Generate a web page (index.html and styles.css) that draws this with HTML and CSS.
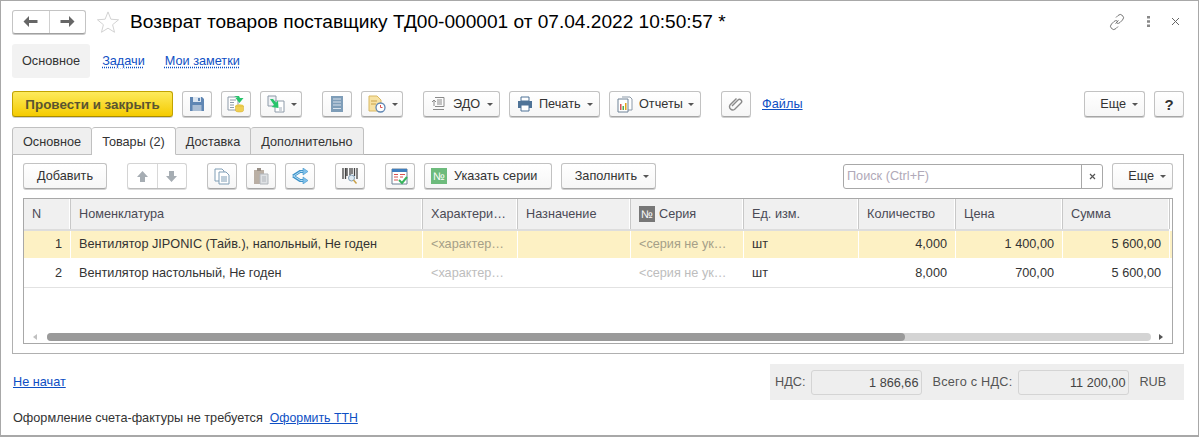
FILE: index.html
```html
<!DOCTYPE html>
<html lang="ru">
<head>
    <meta charset="UTF-8">
    <title>Возврат товаров поставщику</title>
    <link rel="stylesheet" href="styles.css">
</head>
<body>
<div class="window">
    <div class="titlebar">
        <div class="nav-group">
            <span class="nav-btn"><svg width="15" height="11" viewBox="0 0 15 11"><path d="M6 0v4h8.500v3H6v4L.5 5.500z" fill="#666"/></svg></span>
            <span class="nav-btn"><svg width="15" height="11" viewBox="0 0 15 11"><path d="M9 0v4H.5v3H9v4l5.500-5.500z" fill="#666"/></svg></span>
        </div>
        <svg class="star" width="24" height="24" viewBox="0 0 25 24"><path d="M12.5 1.500l3 7.600 8 .6-6.200 5.100 2 7.900-6.800-4.300-6.800 4.300 2-7.900L1.500 9.700l8-.6z" fill="#fff" stroke="#d0d0d0"/></svg>
        <h1 class="title">Возврат товаров поставщику ТД00-000001 от 07.04.2022 10:50:57 *</h1>
        <div class="win-tools">
            <svg width="18" height="18" viewBox="0 0 18 18"><path d="M7.500 10.500l3-3M8 4.500l2-2a3 3 0 0 1 4.500 4.500l-2.500 2.500a3 3 0 0 1-3.500.500M10 13.500l-2 2A3 3 0 0 1 3.500 11L6 8.500a3 3 0 0 1 3.500-.500" fill="none" stroke="#777"/></svg>
            <svg width="3" height="11" viewBox="0 0 3 11"><path d="M0 0h3v2.500H0zM0 4.200h3v2.500H0zM0 8.400h3v2.500H0z" fill="#888"/></svg>
            <svg width="9" height="9" viewBox="0 0 9 9"><path d="M1 1l7 7M8 1L1 8" stroke="#666" fill="none"/></svg>
        </div>
    </div>

    <div class="sections">
        <span class="section active">Основное</span>
        <a class="section dotted">Задачи</a>
        <a class="section dotted">Мои заметки</a>
    </div>

    <div class="toolbar top">
        <button class="btn primary">Провести и закрыть</button>
        <button class="btn icon"><svg width="16" height="16" viewBox="0 0 16 16"><path d="M1 1h12l2 2v12H1z" fill="#5f86b3"/><path d="M4 1h8v5H4z" fill="#dbe5f0"/><path d="M3.500 9h9v6h-9z" fill="#a9bdd4"/><path d="M9 2h2v3H9z" fill="#5f86b3"/></svg></button>
        <button class="btn icon"><svg width="18" height="18" viewBox="0 0 18 18"><path d="M1 2h10v13H1z" fill="#fff" stroke="#8d9aa8"/><path d="M3 5h6M3 7.500h4M3 10h4M3 12.500h4" stroke="#8d9aa8"/><ellipse cx="12.500" cy="11" rx="4" ry="1.700" fill="#f0cf52"/><path d="M8.500 11v4.500c0 2 8 2 8 0V11z" fill="#f0cf52" stroke="#d3ad2c" stroke-width=".5"/><path d="M7 1h5l1 2h3.500l-4 5L8.500 3H11z" fill="#28c46b"/></svg></button>
        <button class="btn icon-drop"><svg width="18" height="18" viewBox="0 0 18 18"><path d="M1 1h8v10H1z" fill="#eef1f4" stroke="#8d9aa8"/><path d="M8 6h9v11H8z" fill="#fff" stroke="#8d9aa8"/><path d="M12 13h3M12 15h3" stroke="#8d9aa8" stroke-width=".8"/><path d="M3 4h3l3 3.500 2-2 .5 7.500-7-1 2.500-2z" fill="#28c46b"/></svg><i class="caret"></i></button>
        <button class="btn icon sep"><svg width="14" height="18" viewBox="0 0 14 18"><path d="M1 1h12v16H1z" fill="#7e9db8"/><path d="M3 4h8M3 7h8M3 10h8M3 13.500h8" stroke="#d7e2ec" stroke-width="1.200"/></svg></button>
        <button class="btn icon-drop"><svg width="18" height="18" viewBox="0 0 18 18"><path d="M1 1h8l4 4v11H1z" fill="#f7e2a3" stroke="#d9b862"/><path d="M3 6h6M3 9h5" stroke="#c9a24a"/><circle cx="12.500" cy="12.500" r="4.500" fill="#fff" stroke="#5f86b3" stroke-width="1.300"/><path d="M12.500 10v2.500h2" stroke="#d9534f" fill="none"/></svg><i class="caret"></i></button>
        <button class="btn sep with-icon edo"><svg width="16" height="16" viewBox="0 0 16 16"><path d="M4 1.500h9v9H4M6 4h5M6 6h5M6 8h5" fill="none" stroke="#8a8a8a"/><path d="M1 6l2-2 2 2M3 4v6M2 13.500h11" fill="none" stroke="#8a8a8a"/></svg>ЭДО<i class="caret"></i></button>
        <button class="btn with-icon print"><svg width="16" height="16" viewBox="0 0 16 16"><path d="M4 1h8v4H4z" fill="#fff" stroke="#4f7397"/><path d="M1 5h14v7H1z" fill="#4f7397"/><path d="M4 9h8v6H4z" fill="#fff" stroke="#4f7397"/></svg>Печать<i class="caret"></i></button>
        <button class="btn with-icon reports"><svg width="16" height="17" viewBox="0 0 16 17"><path d="M5 1h8l2 2v11h-4" fill="#fff" stroke="#8d9aa8"/><path d="M1 3h10v13H1z" fill="#fff" stroke="#6f8296"/><path d="M3 8h1.500v6H3z" fill="#d9534f"/><path d="M5.500 10H7v4H5.500z" fill="#4caf50"/><path d="M8 7h1.500v7H8z" fill="#e4a11b"/></svg>Отчеты<i class="caret"></i></button>
        <button class="btn icon sep"><svg width="16" height="16" viewBox="0 0 16 16"><path d="M3.500 9.500l6-6a2 2 0 0 1 3 3L6 13a3.300 3.300 0 0 1-4.500-4.500L8 2" transform="translate(.5 .5)" fill="none" stroke="#8a8a8a" stroke-width="1.400"/></svg></button>
        <a class="files">Файлы</a>
        <span class="spacer"></span>
        <button class="btn more">Еще<i class="caret"></i></button>
        <button class="btn icon help">?</button>
    </div>

    <div class="tabs">
        <span class="tab t-main">Основное</span>
        <span class="tab t-goods current">Товары (2)</span>
        <span class="tab t-delivery">Доставка</span>
        <span class="tab t-extra">Дополнительно</span>
    </div>
    <div class="panel">
        <div class="toolbar">
            <button class="btn add">Добавить</button>
            <div class="updown sep">
                <span><svg width="13" height="13" viewBox="0 0 13 13"><path d="M6.500 1L12 7H9v5H4V7H1z" fill="#a6adb3"/></svg></span>
                <span><svg width="13" height="13" viewBox="0 0 13 13"><path d="M6.500 12L12 6H9V1H4v5H1z" fill="#a6adb3"/></svg></span>
            </div>
            <button class="btn icon sep"><svg width="16" height="17" viewBox="0 0 16 17"><path d="M1 1h7l2 2v10H1z" fill="#fff" stroke="#7f9db5"/><path d="M5 4h7l3 3v9H5z" fill="#fff" stroke="#7f9db5"/><path d="M7 9h6M7 11h6M7 13h6" stroke="#7f9db5"/></svg></button>
            <button class="btn icon faded"><svg width="16" height="18" viewBox="0 0 16 18"><path d="M1 3h10v14H1z" fill="#b3a79b"/><path d="M4 1h4v3H4z" fill="#8f857b"/><path d="M7 7h8v10H7z" fill="#dcdfe2" stroke="#a9afb5"/><path d="M9 10h4M9 12h4M9 14h4" stroke="#a9afb5"/></svg></button>
            <button class="btn icon"><svg width="18" height="16" viewBox="0 0 18 16"><path d="M2 8l7-4.500h4M2 8l7 4.500h4" fill="none" stroke="#3f93c9" stroke-width="3"/><path d="M2.500 8l7-4.500h4M2.500 8l7 4.500h4" fill="none" stroke="#b5dff7"/><path d="M12 0l5 3.500-5 3.500zM12 9l5 3.500-5 3.500z" fill="#7fc0ea" stroke="#3f93c9" stroke-width=".6"/></svg></button>
            <button class="btn icon sep"><svg width="16" height="18" viewBox="0 0 16 18"><path d="M1 1v11M3.500 1v11M5 1v8M8 1v7M10 1v6M12.500 1v8M15 1v11" stroke="#444" stroke-width="1.300"/><circle cx="9.500" cy="11" r="3" fill="#dfeaf2" stroke="#7f9db5"/><path d="M11.500 13l3 3.500" stroke="#c9a24a" stroke-width="1.500"/></svg></button>
            <button class="btn icon sep"><svg width="18" height="17" viewBox="0 0 18 17"><path d="M1 1h15v15H1z" fill="#fff" stroke="#6f8296"/><path d="M1 1h15v3H1z" fill="#3f7fbf"/><path d="M3 6.500h4M9 6.500h5M3 9h4M9 9h3M3 12h4" stroke="#d9534f"/><path d="M8 12l3 3 5-6" fill="none" stroke="#35b35a" stroke-width="2"/></svg></button>
            <button class="btn with-icon series"><span class="num green">№</span>Указать серии</button>
            <button class="btn fill">Заполнить<i class="caret"></i></button>
            <span class="spacer"></span>
            <div class="search">
                <span class="search-text">Поиск (Ctrl+F)</span>
                <span class="search-clear"><svg width="7" height="7" viewBox="0 0 7 7"><path d="M1 1l5 5M6 1L1 6" stroke="#555" fill="none" stroke-width="1.200"/></svg></span>
            </div>
            <button class="btn more">Еще<i class="caret"></i></button>
        </div>

        <div class="grid">
            <div class="row head">
                <div class="cell">N</div>
                <div class="cell">Номенклатура</div>
                <div class="cell">Характери…</div>
                <div class="cell">Назначение</div>
                <div class="cell"><span class="num gray">№</span>Серия</div>
                <div class="cell">Ед. изм.</div>
                <div class="cell">Количество</div>
                <div class="cell">Цена</div>
                <div class="cell">Сумма</div>
            </div>
            <div class="row body selected">
                <div class="cell right">1</div>
                <div class="cell">Вентилятор JIPONIC (Тайв.), напольный, Не годен</div>
                <div class="cell hint">&lt;характер…</div>
                <div class="cell"></div>
                <div class="cell hint">&lt;серия не ук…</div>
                <div class="cell">шт</div>
                <div class="cell right">4,000</div>
                <div class="cell right">1 400,00</div>
                <div class="cell right">5 600,00</div>
            </div>
            <div class="row body">
                <div class="cell right">2</div>
                <div class="cell">Вентилятор настольный, Не годен</div>
                <div class="cell hint">&lt;характер…</div>
                <div class="cell"></div>
                <div class="cell hint">&lt;серия не ук…</div>
                <div class="cell">шт</div>
                <div class="cell right">8,000</div>
                <div class="cell right">700,00</div>
                <div class="cell right">5 600,00</div>
            </div>
            <div class="scrollbar">
                <i class="arrow left"></i>
                <div class="track"><div class="thumb"></div></div>
                <i class="arrow right"></i>
            </div>
        </div>
    </div>

    <div class="footer">
        <a class="link">Не начат</a>
        <div class="totals">
            <span>НДС:</span>
            <span class="total-field first">1 866,66</span>
            <span class="total-label">Всего с НДС:</span>
            <span class="total-field">11 200,00</span>
            <span class="currency">RUB</span>
        </div>
    </div>
    <div class="bottom-line">
        <span>Оформление счета-фактуры не требуется</span>
        <a class="link">Оформить ТТН</a>
    </div>
</div>
</body>
</html>
```

FILE: styles.css
```css
* {
    box-sizing: border-box;
}

body {
    margin: 0;
    font-family: "Liberation Sans", Arial, sans-serif;
    font-size: 12.7px;
    color: #333;
    background-color: #fff;
}

.window {
    width: 1199px;
    height: 437px;
    padding: 8px 14px 0 11px;
    border: 1px solid #a8a8a8;
    border-bottom-width: 2px;
    overflow: hidden;
}

a {
    color: #0e4fc4;
    text-decoration: underline;
}

.titlebar {
    display: flex;
    align-items: center;
    height: 25px;
}

.nav-group {
    display: flex;
    width: 74px;
    height: 24px;
    border: 1px solid #c4c4c4;
    border-bottom-color: #a0a0a0;
    border-radius: 3px;
    box-shadow: 0 1px 0 #c8c8c8;
}

.nav-btn {
    flex: 1;
    display: flex;
    align-items: center;
    justify-content: center;
}

.nav-btn + .nav-btn {
    border-left: 1px solid #d0d0d0;
}

.star {
    margin-left: 10px;
}

.title {
    margin: 0 0 0 10px;
    font-size: 19.1px;
    font-weight: normal;
    color: #000;
    white-space: nowrap;
}

.win-tools {
    margin-left: auto;
    display: flex;
    align-items: center;
    gap: 21px;
    margin-right: 4px;
}

.sections {
    display: flex;
    margin-top: 10px;
}

.section {
    height: 34px;
    padding: 0 10px;
    line-height: 35px;
    border-radius: 3px;
    margin-right: 1px;
}

.section.active {
    background-color: #f2f2f2;
}

.section.dotted {
    padding: 0 10px 0 11px;
    color: #0e4fc4;
    text-decoration: underline dotted;
    text-underline-offset: 2px;
    margin-right: -1px;
}

.toolbar {
    display: flex;
    gap: 9px;
    align-items: center;
}

.toolbar.top {
    margin-top: 13px;
}

.spacer {
    flex: 1;
}

.btn {
    display: flex;
    align-items: center;
    justify-content: center;
    height: 26px;
    padding: 0 10px;
    font-family: inherit;
    font-size: 12.7px;
    color: #333;
    background: linear-gradient(#fff, #f6f6f6);
    border: 1px solid #c2c2c2;
    border-bottom-color: #a6a6a6;
    border-radius: 3px;
    box-shadow: 0 1px 0 #cfcfcf;
}

.btn.primary {
    width: 161px;
    font-size: 13.4px;
    font-weight: bold;
    color: #5a5430;
    background: linear-gradient(#fdea5c, #f5cb00);
    border-color: #c2a300;
    border-bottom-color: #a88c00;
}

.btn.icon {
    width: 30px;
    padding: 0;
}

.btn.faded svg {
    opacity: .9;
}

.btn.icon-drop {
    width: 42px;
    padding: 0 0 0 3px;
    justify-content: flex-start;
}

.btn.icon-drop svg {
    margin-left: 3px;
}

.btn.with-icon {
    padding: 0 6px 0 7px;
    justify-content: flex-start;
}

.btn.with-icon svg {
    margin-right: 6px;
}

.btn.edo {
    width: 77px;
}

.btn.print {
    width: 91px;
}

.btn.reports {
    width: 92px;
}

.btn.with-icon .caret {
    margin-left: auto;
}

.sep {
    margin-left: 11px;
}

.caret {
    display: inline-block;
    width: 0;
    height: 0;
    margin-left: 6px;
    border: 3px solid transparent;
    border-top: 3px solid #555;
    border-bottom: 0;
}

.files {
    margin-left: 2px;
    letter-spacing: .05px;
}

.btn.more {
    width: 61px;
    padding: 0 6px 0 0;
    justify-content: flex-end;
}

.btn.help {
    font-size: 15px;
    font-weight: bold;
    color: #333;
}

.tabs {
    display: flex;
    margin-top: 10px;
    margin-bottom: -1px;
    position: relative;
    z-index: 1;
}

.tab {
    height: 28px;
    line-height: 28px;
    text-align: center;
    background-color: #efefef;
    border: 1px solid #c0c0c0;
    border-left-width: 0;
    border-radius: 3px 3px 0 0;
}

.t-main {
    width: 80px;
    border-left-width: 1px;
}

.t-goods {
    width: 84px;
}

.t-delivery {
    width: 75px;
}

.t-extra {
    width: 113px;
}

.tab.current {
    background-color: #fff;
    border-bottom-color: #fff;
}

.panel {
    height: 200px;
    padding: 8px 10px 0;
    border: 1px solid #b0b0b0;
}

.add {
    width: 84px;
}

.updown {
    display: flex;
    width: 60px;
    height: 26px;
    border: 1px solid #d4d4d4;
    border-bottom-color: #bcbcbc;
    border-radius: 3px;
    box-shadow: 0 1px 0 #dcdcdc;
}

.updown span {
    flex: 1;
    display: flex;
    align-items: center;
    justify-content: center;
}

.updown span + span {
    border-left: 1px solid #d8d8d8;
}

.btn.series {
    width: 128px;
    padding-left: 6px;
}

.btn.fill {
    width: 95px;
    padding: 0 6px 0 0;
    justify-content: flex-end;
}

.num {
    display: inline-block;
    width: 16px;
    height: 16px;
    margin-right: 7px;
    font-size: 11px;
    line-height: 16px;
    text-align: center;
    color: #fff;
}

.num.green {
    background-color: #6dbb7c;
}

.num.gray {
    background-color: #777;
    margin-right: 4px;
}

.search {
    display: flex;
    width: 260px;
    height: 25px;
    border: 1px solid #a8a8a8;
    border-radius: 3px;
}

.search-text {
    flex: 1;
    padding-left: 3px;
    line-height: 23px;
    color: #b0a9b8;
}

.search-clear {
    display: flex;
    align-items: center;
    justify-content: center;
    width: 21px;
    border-left: 1px solid #a8a8a8;
}

.grid {
    position: relative;
    height: 146px;
    margin-top: 9px;
    border: 1px solid #a8a8a8;
}

.row {
    display: grid;
    grid-template-columns: 47px 352px 95px 113px 113px 115px 97px 107px 107px;
}

.cell {
    padding: 0 8px;
    white-space: nowrap;
    overflow: hidden;
    border-right: 1px solid #fff;
}

.row.head {
    height: 32px;
    background-color: #f0f0f0;
    border-bottom: 2px solid #ddd;
    margin-right: 3px;
}

.row.head .cell {
    display: flex;
    align-items: center;
    height: 30px;
    color: #4a4a55;
    border-right: 1px solid #c8c8c8;
    box-shadow: inset -1px 0 0 #fff;
}

.row.body {
    height: 29px;
    line-height: 29px;
    border-bottom: 1px solid #e2e2e2;
}

.row.selected {
    height: 28px;
    line-height: 27px;
    background-color: #fdf1c4;
    border-bottom: 1px solid #fff;
}

.right {
    text-align: right;
}

.hint {
    color: #bdbdbd;
}

.selected .hint {
    color: #a59f88;
}

.scrollbar {
    position: absolute;
    left: 0;
    right: 0;
    bottom: 2px;
    display: flex;
    align-items: center;
    height: 8px;
    padding: 0 9px;
}

.track {
    flex: 1;
    height: 8px;
    margin: 0 8px 0 10px;
    background-color: #d4d4d4;
    border-radius: 4px;
}

.thumb {
    width: 858px;
    height: 8px;
    background-color: #9a9a9a;
    border-radius: 4px;
}

.arrow {
    width: 0;
    height: 0;
    border: 3px solid transparent;
}

.arrow.left {
    border-right: 4px solid #c0c0c0;
    border-left: 0;
}

.arrow.right {
    border-left: 4px solid #555;
    border-right: 0;
}

.footer {
    display: flex;
    justify-content: space-between;
    align-items: center;
    margin-top: 10px;
    padding-left: 1px;
}

.totals {
    display: flex;
    align-items: center;
    width: 414px;
    height: 36px;
    padding: 0 5px;
    background-color: #eee;
    color: #555;
}

.total-field {
    width: 111px;
    height: 25px;
    margin-left: 5px;
    padding-right: 3px;
    line-height: 24px;
    text-align: right;
    border: 1px solid #d4d4d4;
    border-radius: 3px;
    color: #444;
}

.total-field.first {
    margin-left: 6px;
}

.total-label {
    width: 81px;
    margin-left: 10px;
    letter-spacing: .25px;
    white-space: nowrap;
}

.currency {
    margin-left: 10px;
}

.bottom-line {
    display: flex;
    gap: 7px;
    margin-top: 11px;
    padding-left: 1px;
}

.bottom-line .link {
    font-size: 12.3px;
}
```
